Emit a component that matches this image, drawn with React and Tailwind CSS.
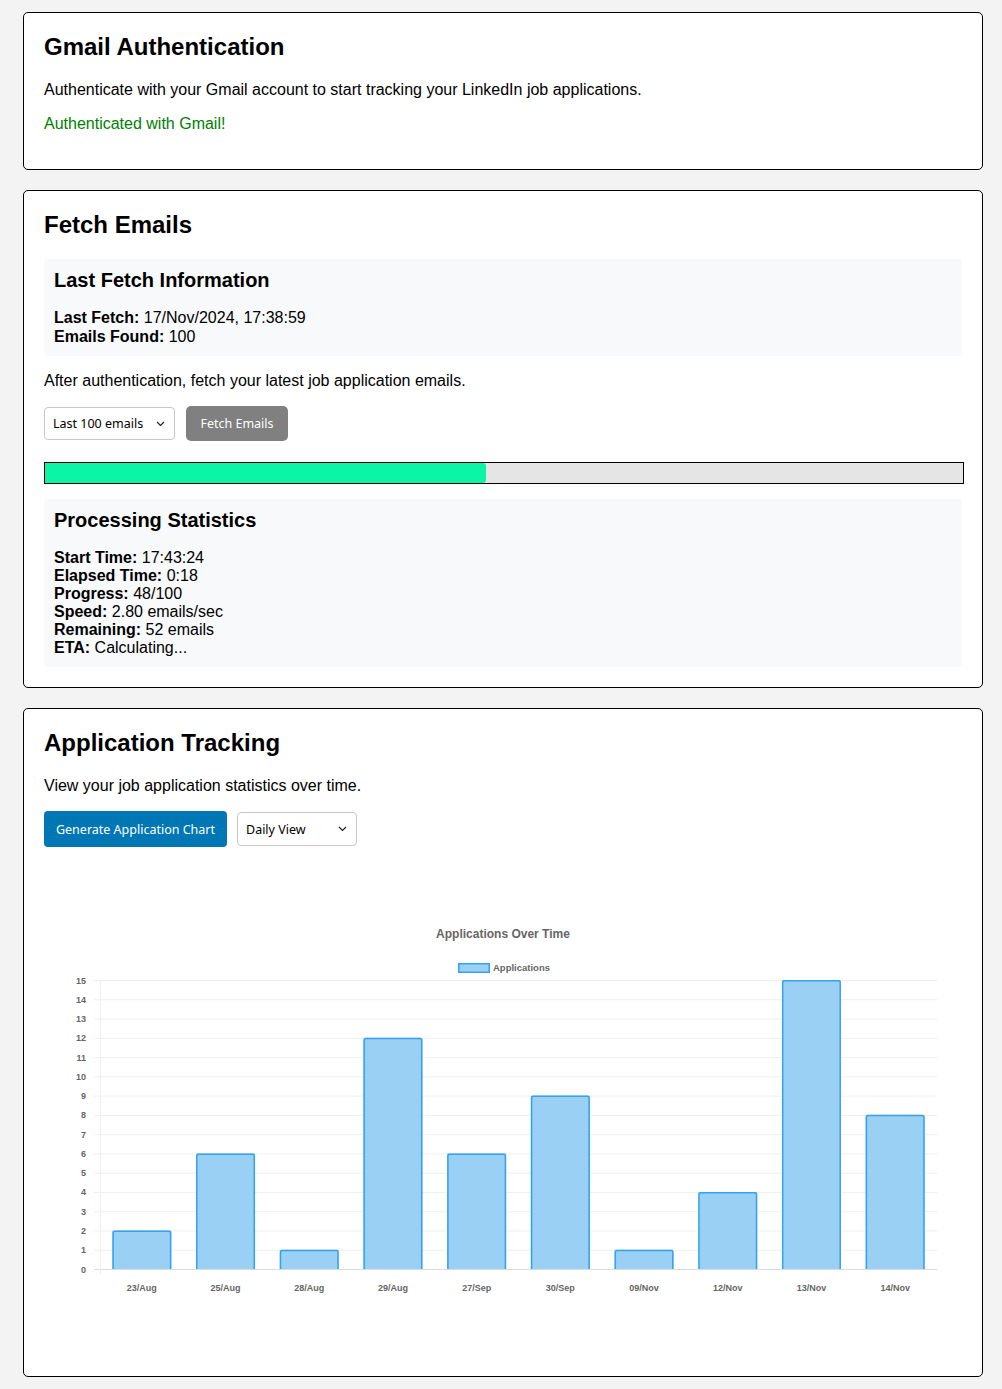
import React from 'react';

const chartData = [
  { label: '23/Aug', value: 2 },
  { label: '25/Aug', value: 6 },
  { label: '28/Aug', value: 1 },
  { label: '29/Aug', value: 12 },
  { label: '27/Sep', value: 6 },
  { label: '30/Sep', value: 9 },
  { label: '09/Nov', value: 1 },
  { label: '12/Nov', value: 4 },
  { label: '13/Nov', value: 15 },
  { label: '14/Nov', value: 8 },
];

const processingStats = [
  ['Start Time:', '17:43:24'],
  ['Elapsed Time:', '0:18'],
  ['Progress:', '48/100'],
  ['Speed:', '2.80 emails/sec'],
  ['Remaining:', '52 emails'],
  ['ETA:', 'Calculating...'],
];

function Chevron() {
  return (
    <svg width="9" height="6" viewBox="0 0 9 6" fill="none">
      <path d="M1 1l3.5 3.5L8 1" stroke="#222" strokeWidth="1.2" />
    </svg>
  );
}

function FakeSelect({ value, width }) {
  return (
    <div
      className={`flex items-center justify-between pl-2 pr-[9px] bg-white border border-[#c8c8c8] rounded-[4px] text-[12.5px] text-black ${width}`}
      style={{ fontFamily: '"Noto Sans", sans-serif' }}
    >
      <span>{value}</span>
      <Chevron />
    </div>
  );
}

function StatBox({ title, rows, rowClass = 'leading-[18px]' }) {
  return (
    <div className="bg-[#f8f9fa] rounded-[4px] p-[10px]">
      <h3 className="text-[20px] font-bold mb-[17px]">{title}</h3>
      {rows.map(([k, v]) => (
        <div key={k} className={`text-[16px] ${rowClass}`}>
          <span className="font-bold">{k}</span> {v}
        </div>
      ))}
    </div>
  );
}

function ApplicationsChart() {
  // plot area in svg coords
  const left = 56;
  const right = 893;
  const bottom = 402;
  const unit = 289 / 15;
  const slot = (right - left) / chartData.length;
  const barW = 59;
  const y = (v) => bottom - v * unit;

  return (
    <svg width="918" height="489" viewBox="0 0 918 489" className="block">
      <text x="459" y="71" textAnchor="middle" fontSize="12" fontWeight="bold" fill="#666" fontFamily="Liberation Sans, Arial, sans-serif">
        Applications Over Time
      </text>

      {/* legend */}
      <rect x="414.75" y="96.75" width="30.5" height="8.5" fill="#9bd0f5" stroke="#36a2eb" strokeWidth="1.5" />
      <text x="449" y="104" fontSize="9.5" fontWeight="bold" fill="#666" fontFamily="Liberation Sans, Arial, sans-serif">
        Applications
      </text>

      {/* grid */}
      {Array.from({ length: 16 }, (_, i) => (
        <g key={i}>
          <line x1="50" x2={right} y1={y(i) + 0.5} y2={y(i) + 0.5} stroke={i === 0 ? '#dcdcdc' : '#efefef'} strokeWidth="1" />
          <text x="42" y={y(i) + 3.5} textAnchor="end" fontSize="9" fontWeight="bold" fill="#666" fontFamily="Liberation Sans, Arial, sans-serif">
            {i}
          </text>
        </g>
      ))}
      <line x1={left + 0.5} x2={left + 0.5} y1={y(15)} y2={bottom + 6} stroke="#efefef" strokeWidth="1" />

      {/* bars */}
      {chartData.map((d, i) => {
        const cx = left + slot * (i + 0.5);
        const x0 = cx - barW / 2;
        const x1 = cx + barW / 2;
        const top = y(d.value);
        return (
          <g key={d.label}>
            <rect x={x0} y={top} width={barW} height={bottom - top} fill="#9bd0f5" />
            <path
              d={`M${x0 + 0.75} ${bottom} V${top + 2.5} Q${x0 + 0.75} ${top + 0.75} ${x0 + 2.5} ${top + 0.75} H${x1 - 2.5} Q${x1 - 0.75} ${top + 0.75} ${x1 - 0.75} ${top + 2.5} V${bottom}`}
              fill="none"
              stroke="#36a2eb"
              strokeWidth="1.5"
            />
            <text x={cx} y="424" textAnchor="middle" fontSize="9" fontWeight="bold" fill="#666" fontFamily="Liberation Sans, Arial, sans-serif">
              {d.label}
            </text>
          </g>
        );
      })}
    </svg>
  );
}

export default function App() {
  return (
    <div
      className="min-h-screen bg-[#f3f3f3] pt-3 pb-3 text-black leading-[normal]"
      style={{ fontFamily: '"Liberation Sans", Arial, sans-serif' }}
    >
      <div className="w-[960px] ml-[23px] flex flex-col gap-5">
        {/* Gmail Authentication */}
        <div className="bg-white border border-black rounded-[5px] p-5">
          <h2 className="text-[24px] font-bold mb-5">Gmail Authentication</h2>
          <p className="text-[16px] mb-4">
            Authenticate with your Gmail account to start tracking your LinkedIn job applications.
          </p>
          <p className="text-[16px] mb-4 text-[#008000]">Authenticated with Gmail!</p>
        </div>

        {/* Fetch Emails */}
        <div className="bg-white border border-black rounded-[5px] p-5">
          <h2 className="text-[24px] font-bold mb-5">Fetch Emails</h2>
          <StatBox
            title="Last Fetch Information"
            rowClass="leading-[18.5px]"
            rows={[
              ['Last Fetch:', '17/Nov/2024, 17:38:59'],
              ['Emails Found:', '100'],
            ]}
          />
          <p className="text-[16px] my-4">After authentication, fetch your latest job application emails.</p>
          <div className="flex items-center gap-[11px] h-[35px]">
            <FakeSelect value="Last 100 emails" width="w-[131px] h-[33px]" />
            <button
              className="h-[35px] w-[102px] bg-[#808080] text-white text-[12.5px] rounded-[5px]"
              style={{ fontFamily: '"Noto Sans", sans-serif' }}
            >
              Fetch Emails
            </button>
          </div>
          <div className="mt-[21px] h-[22px] w-[920px] border border-black bg-[#e5e5e5]">
            <div className="h-full bg-[#0af5a6] rounded-r-[3px]" style={{ width: '48%' }} />
          </div>
          <div className="mt-[15px]">
            <StatBox title="Processing Statistics" rows={processingStats} />
          </div>
        </div>

        {/* Application Tracking */}
        <div className="bg-white border border-black rounded-[5px] p-5">
          <h2 className="text-[24px] font-bold mb-5">Application Tracking</h2>
          <p className="text-[16px] mb-4">View your job application statistics over time.</p>
          <div className="flex items-center gap-[10px]">
            <button
              className="h-[36px] w-[183px] bg-[#0077b5] text-white text-[12.5px] rounded-[4px]"
              style={{ fontFamily: '"Noto Sans", sans-serif' }}
            >
              Generate Application Chart
            </button>
            <FakeSelect value="Daily View" width="w-[120px] h-[34px]" />
          </div>
          <div className="mt-5">
            <ApplicationsChart />
          </div>
        </div>
      </div>
    </div>
  );
}
